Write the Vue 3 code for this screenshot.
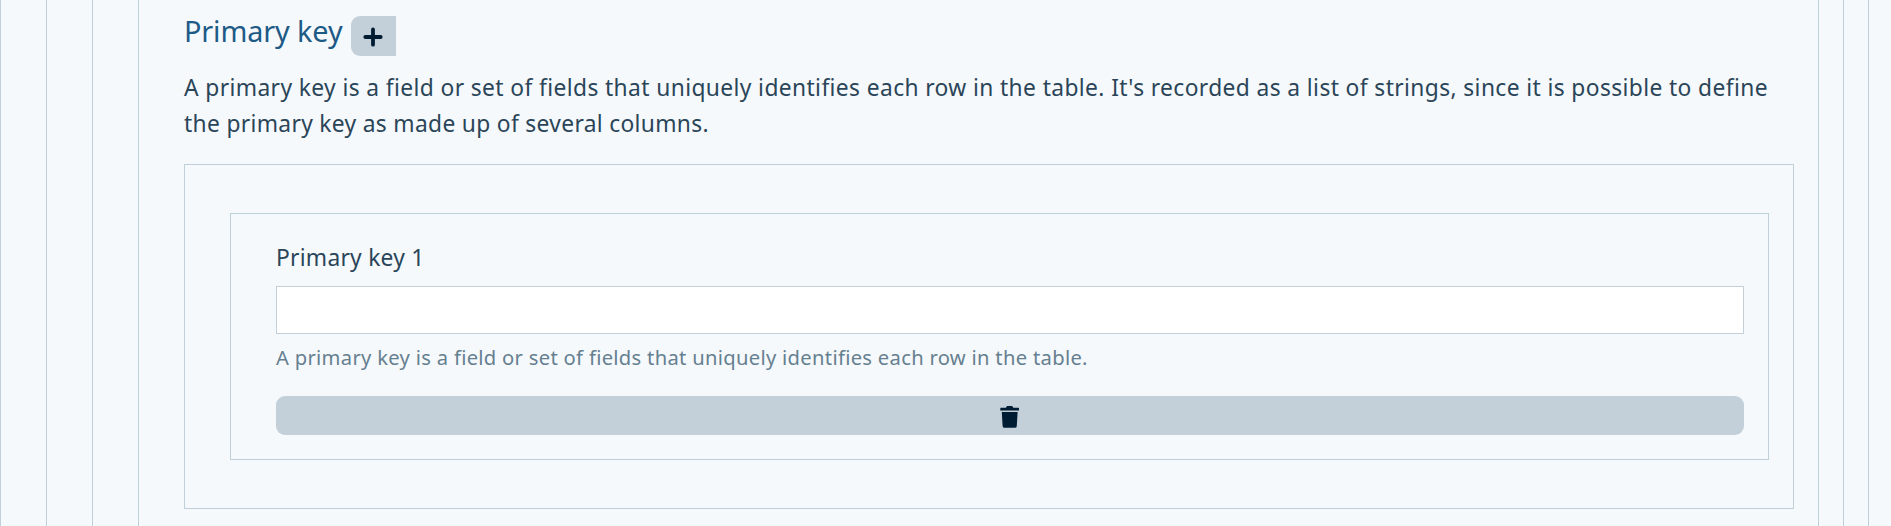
<script setup>
import { ref } from 'vue'

const keys = ref([''])
</script>

<template>
  <div class="level outer">
    <div class="level">
      <div class="level">
        <div class="level content">
          <header class="heading">
            <h2>Primary key</h2>
            <button class="add" type="button" aria-label="Add">
              <svg width="20" height="20" viewBox="0 0 20 20">
                <path d="M10 2.3V17.7M2.3 10H17.7" />
              </svg>
            </button>
          </header>
          <p class="description">A primary key is a field or set of fields that uniquely identifies each row in the table. It's recorded as a list of strings, since it is possible to define <span class="second">the primary key as made up of several columns.</span></p>
          <section class="list">
            <div v-for="(key, i) in keys" :key="i" class="item">
              <label :for="'key' + i">Primary key {{ i + 1 }}</label>
              <input :id="'key' + i" v-model="keys[i]" type="text" />
              <small>A primary key is a field or set of fields that uniquely identifies each row in the table.</small>
              <button class="remove" type="button" aria-label="Remove">
                <svg width="20" height="22" viewBox="0 0 20 22">
                  <path d="M7 0H12.2L13.3 1.8H18.5Q19 1.8 19 2.4V4.5H.3V2.4Q.3 1.8 .8 1.8H5.9ZM1.8 6H17.6L16.8 19.9Q16.7 21.8 14.9 21.8H4.5Q2.7 21.8 2.6 19.9Z" />
                </svg>
              </button>
            </div>
          </section>
        </div>
      </div>
    </div>
  </div>
</template>

<style>
body {
  overflow: hidden;
  background: #f5f9fc;
}
</style>

<style scoped>
* {
  box-sizing: border-box;
}
.level {
  height: 526px;
  padding: 0 24px 0 45px;
  border: solid #c0d0da;
  border-width: 0 1px;
  color: #2b4558;
  font-family: "Segoe UI", "Noto Sans", sans-serif;
  font-variant-ligatures: none;
}
.outer {
  width: 1894px;
}
.heading {
  display: flex;
  height: 56px;
}
h2 {
  width: 167px;
  margin: 9px 0 0;
  color: #1d5a86;
  font-size: 28.8px;
  font-weight: 400;
  line-height: 44px;
  letter-spacing: -0.1px;
  white-space: nowrap;
}
button {
  display: flex;
  align-items: center;
  justify-content: center;
  padding: 0;
  border: 0;
  background: #c3d0d9;
  color: #001c33;
}
.add {
  width: 45px;
  height: 40px;
  margin-top: 16px;
  border-radius: 9px 0 0 9px;
}
.add svg {
  margin: 2px 1px 0 0;
  fill: none;
  stroke: currentColor;
  stroke-width: 3.8;
  stroke-linecap: round;
}
.description {
  height: 72px;
  margin: 14px 0 22px;
  font-size: 22.8px;
  line-height: 36px;
  letter-spacing: 0.385px;
}
.second {
  display: block;
  letter-spacing: 0.32px;
}
.list {
  height: 345px;
  padding: 48px 24px 48px 45px;
  border: 1px solid #c0d0da;
}
.item {
  display: flex;
  flex-direction: column;
  height: 247px;
  padding: 24px 24px 23px 45px;
  border: 1px solid #c0d0da;
}
label {
  height: 48px;
  font-size: 22.8px;
  line-height: 40px;
  letter-spacing: 0.25px;
}
input {
  height: 48px;
  flex: none;
  padding: 0 18px;
  border: 1px solid #c3d0d9;
  background: #fff;
  font: inherit;
  font-size: 24px;
}
small {
  height: 62px;
  padding-top: 7px;
  color: #668090;
  font-size: 20.2px;
  line-height: 32px;
  letter-spacing: 0.3px;
}
.remove {
  height: 39px;
  flex: none;
  border-radius: 9px;
}
.remove svg {
  margin-top: 3px;
  fill: currentColor;
}
</style>
